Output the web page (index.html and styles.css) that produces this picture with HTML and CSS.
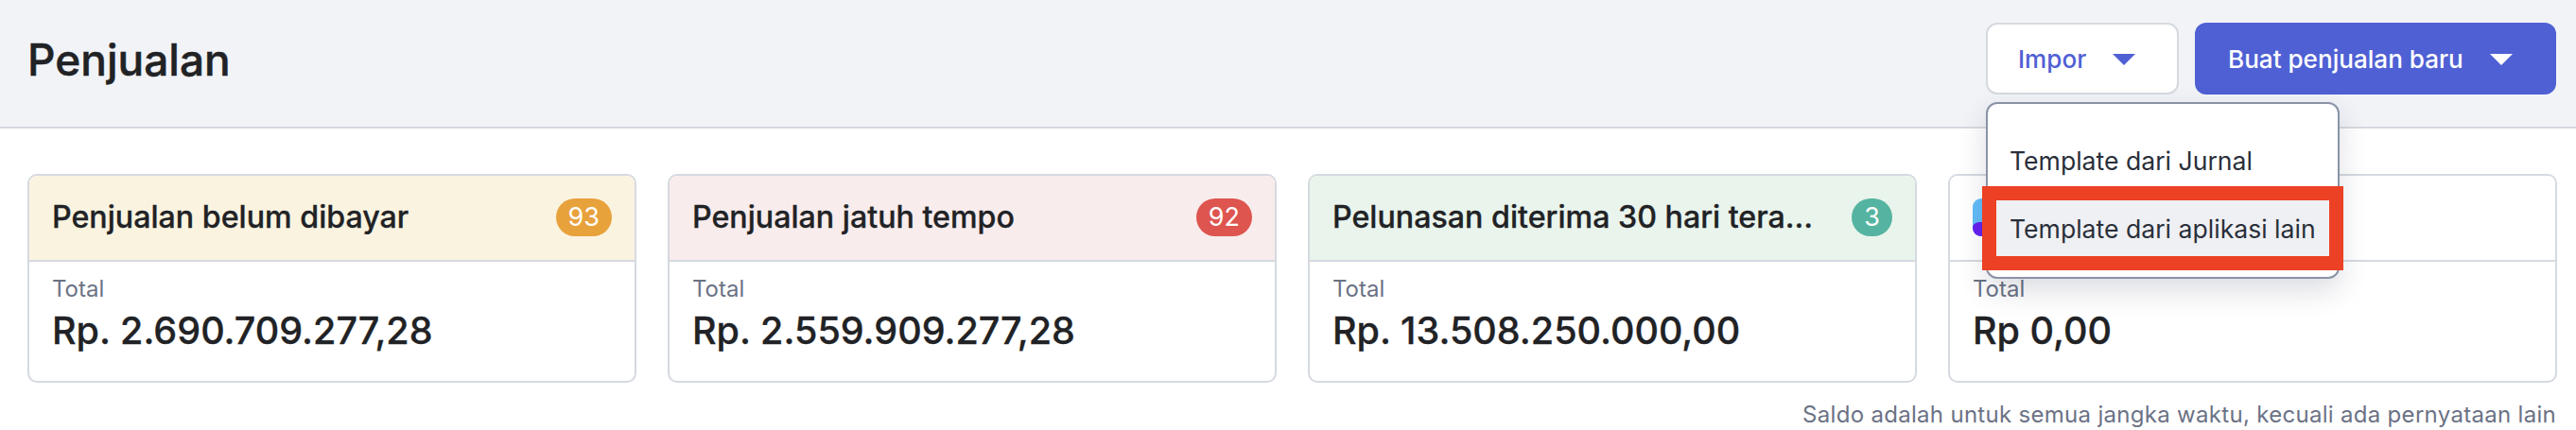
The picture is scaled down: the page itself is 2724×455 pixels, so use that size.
FILE: index.html
```html
<!DOCTYPE html>
<html lang="id">
<head>
<meta charset="utf-8">
<title>Penjualan</title>
<link rel="stylesheet" href="styles.css">
</head>
<body>
<header class="topbar">
  <h1 class="page-title">Penjualan</h1>
  <div class="actions">
    <div class="import-wrap">
      <button class="btn btn-light">Impor<span class="caret"></span></button>
      <div class="menu">
        <div class="menu-item">Template dari Jurnal</div>
        <div class="menu-item menu-item-active">Template dari aplikasi lain</div>
      </div>
    </div>
    <button class="btn btn-primary">Buat penjualan baru<span class="caret"></span></button>
  </div>
</header>
<main class="content">
  <section class="cards">
    <article class="card">
      <div class="card-head head-amber"><span class="card-title">Penjualan belum dibayar</span><span class="badge badge-amber">93</span></div>
      <div class="card-body"><div class="label">Total</div><div class="amount">Rp. 2.690.709.277,28</div></div>
    </article>
    <article class="card">
      <div class="card-head head-red"><span class="card-title">Penjualan jatuh tempo</span><span class="badge badge-red">92</span></div>
      <div class="card-body"><div class="label">Total</div><div class="amount">Rp. 2.559.909.277,28</div></div>
    </article>
    <article class="card">
      <div class="card-head head-green"><span class="card-title">Pelunasan diterima 30 hari terakhir</span><span class="badge badge-green">3</span></div>
      <div class="card-body"><div class="label">Total</div><div class="amount">Rp. 13.508.250.000,00</div></div>
    </article>
    <article class="card">
      <div class="card-head head-white">
        <svg class="card-icon" viewBox="0 0 40 40" width="40" height="40"><rect width="40" height="40" rx="9" fill="#63bcf8"/><path d="M0 31c0-3.500 3-6 8-6h24v15H9c-5 0-9-4-9-9z" fill="#6521f0"/></svg>
      </div>
      <div class="card-body"><div class="label">Total</div><div class="amount">Rp 0,00</div></div>
    </article>
  </section>
  <p class="note">Saldo adalah untuk semua jangka waktu, kecuali ada pernyataan lain</p>
</main>
</body>
</html>
```
FILE: styles.css
```css
* { box-sizing: border-box; }
html, body { margin: 0; padding: 0; }
body {
  width: 2724px;
  height: 455px;
  overflow: hidden;
  background: #fff;
  font-family: Inter, "Liberation Sans", sans-serif;
  color: #212225;
}
.topbar {
  height: 136px;
  padding: 24px 21px 0 29px;
  display: flex;
  justify-content: space-between;
  align-items: flex-start;
  background: #f2f3f7;
  border-bottom: 2px solid #d5d9e0;
}
.page-title {
  margin: 0;
  font-size: 46px;
  line-height: 54px;
  padding-top: 12px;
  font-weight: 500;
  -webkit-text-stroke: 0.5px #212225;
}
.actions { display: flex; gap: 17px; }
.import-wrap { position: relative; }
.btn {
  height: 76px;
  display: flex;
  align-items: center;
  padding-top: 2px;
  border-radius: 12px;
  font: 500 26.1px Inter, "Liberation Sans", sans-serif;
  cursor: pointer;
}
.btn-light {
  width: 204px;
  padding-left: 32px;
  padding-right: 0;
  background: #fff;
  border: 2px solid #d5d9e0;
  color: #4f60d4;
}
.btn-primary {
  width: 382px;
  padding-left: 35px;
  padding-right: 0;
  background: #4f60d4;
  border: 0;
  color: #fff;
}
.caret {
  width: 0;
  height: 0;
  border-left: 12px solid transparent;
  border-right: 12px solid transparent;
  border-top: 12px solid currentColor;
  margin-left: 28px;
}
.menu {
  position: absolute;
  z-index: 5;
  top: 84px;
  left: 0;
  width: 374px;
  height: 187px;
  padding-top: 24px;
  background: #fff;
  border: 2px solid #8a93a6;
  border-radius: 12px;
  box-shadow: 0 12px 30px rgba(30, 40, 70, 0.16);
}
.menu-item {
  height: 72px;
  padding-left: 23px;
  display: flex;
  align-items: center;
  font-size: 26.6px;
  color: #2a2f3a;
}
.menu-item-active {
  position: absolute;
  left: -6px;
  top: 87px;
  width: 382px;
  height: 89px;
  padding-left: 14px;
  background: #eff0f3;
  border: 15px solid #ec4124;
}
.content { padding: 48px 20px 0 29px; }
.cards {
  display: grid;
  grid-template-columns: repeat(4, 1fr);
  gap: 33px;
}
.card {
  height: 221px;
  border: 2px solid #d5d9e0;
  border-radius: 10px;
  overflow: hidden;
}
.card-head {
  height: 91px;
  padding: 0 24px 2px 24px;
  display: flex;
  align-items: center;
  justify-content: space-between;
  gap: 34px;
  border-bottom: 2px solid #d5d9e0;
}
.head-amber { background: #faf3e0; }
.head-red { background: #f8ecec; }
.head-green { background: #e9f4ec; }
.head-white { background: #fff; }
.card-title {
  min-width: 0;
  flex: 1;
  font-size: 32.2px;
  font-weight: 500;
  -webkit-text-stroke: 0.3px #212225;
  white-space: nowrap;
  overflow: hidden;
  text-overflow: ellipsis;
}
.badge {
  flex: none;
  min-width: 42px;
  height: 40px;
  padding: 0 13px;
  border-radius: 20px;
  display: flex;
  align-items: center;
  justify-content: center;
  color: #fff;
  font-size: 27px;
}
.badge-amber { background: #e8a23c; }
.badge-red { background: #de5550; }
.badge-green { background: #55b4a1; }
.card-icon { display: block; }
.card-body { padding: 14px 24px 0; }
.label { font-size: 24px; line-height: 30px; color: #6b7285; }
.amount {
  margin-top: 5px;
  font-size: 39.5px;
  line-height: 48px;
  font-weight: 500;
  -webkit-text-stroke: 0.3px #212225;
}
.note {
  margin: 19px 0 0;
  padding-right: 1px;
  text-align: right;
  font-size: 24px;
  line-height: 30px;
  letter-spacing: 0.3px;
  color: #6b7285;
}
```
